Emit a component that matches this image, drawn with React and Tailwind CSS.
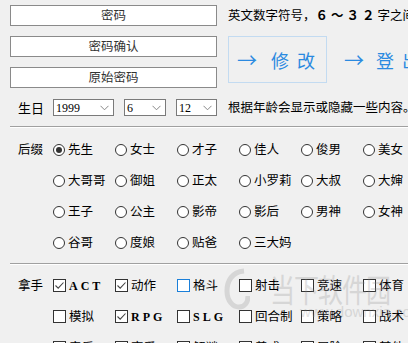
const cjk = { fontFamily: '"Microsoft YaHei", "Noto Sans CJK SC", sans-serif' }

const suffixes = [
  ['先生', '女士', '才子', '佳人', '俊男', '美女'],
  ['大哥哥', '御姐', '正太', '小罗莉', '大叔', '大婶'],
  ['王子', '公主', '影帝', '影后', '男神', '女神'],
  ['谷哥', '度娘', '贴爸', '三大妈'],
]

const skills = [
  [['ACT', true, 'en'], ['动作', true], ['格斗', false, '', true], ['射击', false], ['竞速', false], ['体育', false]],
  [['模拟', false], ['RPG', true, 'en'], ['SLG', false, 'en'], ['回合制', false], ['策略', false], ['战术', false]],
  [['音乐', false], ['恋爱', false], ['解谜', false], ['养成', false], ['冒险', false], ['其他', false]],
]

function Radio({ label, checked }) {
  return (
    <div className="flex items-center gap-[3px] h-[31px]">
      <span className="w-[12px] h-[12px] rounded-full border border-[#333] bg-white flex items-center justify-center shrink-0">
        {checked && <span className="w-[6px] h-[6px] rounded-full bg-[#333]" />}
      </span>
      <span className="text-[12.5px] text-black leading-none whitespace-nowrap">{label}</span>
    </div>
  )
}

function Check({ label, checked, en, focus }) {
  return (
    <div className="flex items-center gap-[3px] h-[31px]">
      <span
        className={`w-[13px] h-[13px] border bg-white flex items-center justify-center shrink-0 ${
          focus ? 'border-[#1a7fd9]' : 'border-[#333]'
        }`}
      >
        {checked && (
          <svg width="11" height="11" viewBox="0 0 11 11">
            <path d="M1.5 5.5 L4.2 8.2 L9.5 2.5" fill="none" stroke="#444" strokeWidth="1.1" />
          </svg>
        )}
      </span>
      {en ? (
        <span
          className="text-[12px] font-bold tracking-[3px] text-black leading-none"
          style={{ fontFamily: '"Liberation Serif", serif' }}
        >
          {label}
        </span>
      ) : (
        <span className="text-[12.5px] text-black leading-none whitespace-nowrap">{label}</span>
      )}
    </div>
  )
}

function Select({ value, width }) {
  return (
    <div className={`${width} shrink-0 h-[17px] border border-[#7a7a7a] bg-white flex items-center justify-between pl-[2px] pr-[4px]`}>
      <span className="text-[12px] leading-none text-black" style={{ fontFamily: '"Liberation Serif", serif' }}>
        {value}
      </span>
      <svg width="9" height="6" viewBox="0 0 9 6">
        <path d="M0.5 0.8 L4.5 4.8 L8.5 0.8" fill="none" stroke="#888" strokeWidth="1" />
      </svg>
    </div>
  )
}

function Field({ text }) {
  return (
    <div className="h-[21px] border border-[#8a8a8a] bg-white flex items-center justify-center">
      <span className="text-[12.5px] text-[#333] leading-none">{text}</span>
    </div>
  )
}

export default function App() {
  return (
    <div className="relative w-[408px] h-[343px] overflow-hidden bg-[#f0f0f0] text-black" style={cjk}>
      <div className="flex pt-[5px] pl-[10px] gap-[11px]">
        <div className="w-[207px] shrink-0 flex flex-col gap-[10px]">
          <Field text="密码" />
          <Field text="密码确认" />
          <Field text="原始密码" />
        </div>
        <div className="flex flex-col whitespace-nowrap">
          <div className="h-[21px] flex items-center text-[12.5px]">
            英文数字符号，<span className="font-bold tracking-[3px]">６～３２</span>字之间。
          </div>
          <div className="mt-[10px] flex items-center">
            <div className="w-[99px] h-[47px] shrink-0 border border-[#c3dbf1] flex items-center pl-[8px] text-[#2b8ae0]">
              <span className="text-[20px] leading-none">→</span>
              <span className="ml-[14px] text-[18px] tracking-[8px] leading-none">修改</span>
            </div>
            <div className="ml-[17px] flex items-center text-[#2b8ae0]">
              <span className="text-[20px] leading-none">→</span>
              <span className="ml-[12px] text-[18px] tracking-[8px] leading-none">登出</span>
            </div>
          </div>
        </div>
      </div>

      <div className="flex items-center mt-[11px] h-[17px]">
        <span className="w-[53px] shrink-0 pl-[18px] text-[13px] leading-none">生日</span>
        <Select value="1999" width="w-[61px]" />
        <div className="w-[10px] shrink-0" />
        <Select value="6" width="w-[42px]" />
        <div className="w-[10px] shrink-0" />
        <Select value="12" width="w-[41px]" />
        <span className="ml-[11px] text-[12.5px] whitespace-nowrap leading-none">根据年龄会显示或隐藏一些内容。</span>
      </div>

      <div className="ml-[10px] mt-[10px] h-[1px] bg-[#a0a0a0]" />
      <div className="ml-[10px] h-[1px] bg-white" />

      <div className="flex mt-[6px]">
        <div className="w-[53px] shrink-0 pl-[18px] h-[31px] flex items-center text-[12.5px] leading-none whitespace-nowrap">
          后缀
        </div>
        <div className="grid grid-cols-[repeat(6,62px)] shrink-0">
          {suffixes.map((row, r) =>
            row.map((label, c) => <Radio key={`${r}-${c}`} label={label} checked={r === 0 && c === 0} />),
          )}
        </div>
      </div>

      <div className="ml-[10px] mt-[5px] h-[1px] bg-[#a0a0a0]" />
      <div className="ml-[10px] h-[1px] bg-white" />

      <div className="flex mt-[5px]">
        <div className="w-[53px] shrink-0 pl-[18px] h-[31px] flex items-center text-[12.5px] leading-none whitespace-nowrap">
          拿手
        </div>
        <div className="grid grid-cols-[repeat(6,62px)] shrink-0">
          {skills.map((row, r) =>
            row.map(([label, checked, en, focus], c) => (
              <Check key={`${r}-${c}`} label={label} checked={checked} en={en === 'en'} focus={focus} />
            )),
          )}
        </div>
      </div>

      <div className="absolute left-[224px] top-[266px] pointer-events-none opacity-25 text-[#8a8a8a]">
        <div className="flex items-center">
          <svg width="26" height="44" viewBox="0 0 26 44">
            <path d="M20 5 C8 6 3 15 3 25 C3 35 9 41 15 41 C21 41 24 36 24 30" fill="none" stroke="#8a8a8a" strokeWidth="5" />
          </svg>
          <span className="ml-[20px] text-[25px] leading-none tracking-[-1px] scale-y-125">当下软件园</span>
        </div>
        <div className="ml-[76px] -mt-[6px] text-[15px] leading-none" style={{ fontFamily: '"Liberation Sans", sans-serif' }}>
          www.downxia.com
        </div>
      </div>
    </div>
  )
}
